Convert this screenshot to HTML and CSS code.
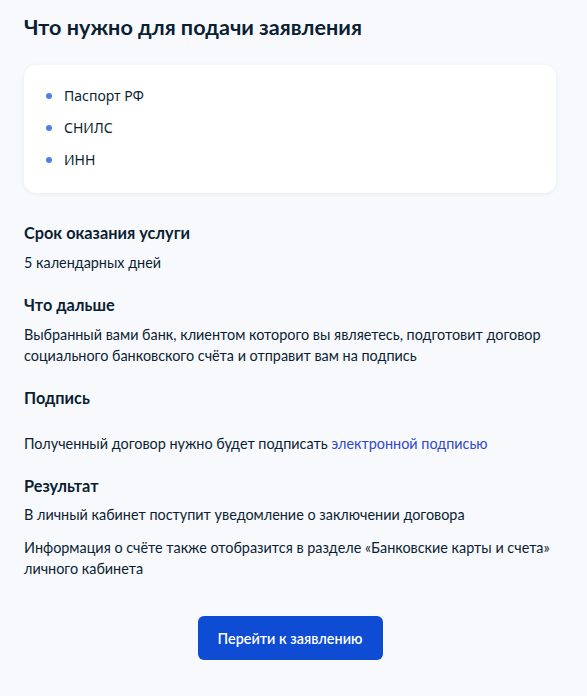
FILE: index.html
```html
<!DOCTYPE html>
<html lang="ru">
<head>
  <meta charset="UTF-8">
  <meta name="viewport" content="width=device-width, initial-scale=1.0">
  <title>Что нужно для подачи заявления</title>
  <link rel="stylesheet" href="styles.css">
</head>
<body>
  <main class="page">
    <h1 class="title">Что нужно для подачи заявления</h1>

    <div class="card">
      <ul class="docs">
        <li>Паспорт РФ</li>
        <li>СНИЛС</li>
        <li>ИНН</li>
      </ul>
    </div>

    <section class="info">
      <h2>Срок оказания услуги</h2>
      <p>5 календарных дней</p>
    </section>

    <section class="info">
      <h2>Что дальше</h2>
      <p>Выбранный вами банк, клиентом которого вы являетесь, подготовит договор социального банковского счёта и отправит вам на подпись</p>
    </section>

    <section class="info info-sign">
      <h2>Подпись</h2>
      <p>Полученный договор нужно будет подписать <a href="#">электронной подписью</a></p>
    </section>

    <section class="info info-result">
      <h2>Результат</h2>
      <p>В личный кабинет поступит уведомление о заключении договора</p>
      <p>Информация о счёте также отобразится в разделе «Банковские карты и счета» личного кабинета</p>
    </section>

    <div class="actions">
      <button class="btn" type="button">Перейти к заявлению</button>
    </div>
  </main>
</body>
</html>
```

FILE: styles.css
```css
*, *::before, *::after {
  padding: 0;
  margin: 0;
  box-sizing: border-box;
}

body {
  background: #f8f9fd;
  color: #0b1f33;
  font-family: Lato, "Noto Sans", sans-serif;
  font-size: 14.4px;
  line-height: 21px;
}

.page {
  padding: 13px 24px 0 24px;
  width: 580px;
}

.title {
  font-size: 21.6px;
  line-height: 28px;
  font-weight: 700;
}

.card {
  margin-top: 24px;
  width: 532px;
  background: #fff;
  border-radius: 12px;
  box-shadow: 0 1px 4px rgba(26, 58, 120, 0.08);
  padding: 21px 24px 23px 22px;
}

.docs {
  list-style: none;
  display: flex;
  flex-direction: column;
  gap: 12px;
}

.docs li {
  display: flex;
  align-items: center;
  gap: 12px;
  font-family: "Noto Sans", sans-serif;
  font-size: 14px;
  line-height: 20px;
}

.docs li::before {
  content: "";
  width: 6px;
  height: 6px;
  border-radius: 50%;
  background: #4a7ff0;
}

.info {
  margin-top: 20px;
}

.card + .info {
  margin-top: 28px;
}

.info h2 {
  font-size: 16.3px;
  line-height: 24px;
  font-weight: 700;
}

.info p {
  margin-top: 7px;
}

.info-sign p {
  margin-top: 22.5px;
}

.info-result {
  margin-top: 20px;
}

.info-result h2 + p {
  margin-top: 6.5px;
}

.info-result p + p {
  margin-top: 11.5px;
}

.info a {
  color: #3149c9;
  text-decoration: none;
}

.actions {
  display: flex;
  justify-content: center;
  margin-top: 37.5px;
}

.btn {
  width: 185px;
  height: 44px;
  border: none;
  border-radius: 6px;
  background: #0d4cd3;
  color: #fff;
  font-family: Lato, sans-serif;
  font-size: 14.4px;
  font-weight: 600;
}
```
